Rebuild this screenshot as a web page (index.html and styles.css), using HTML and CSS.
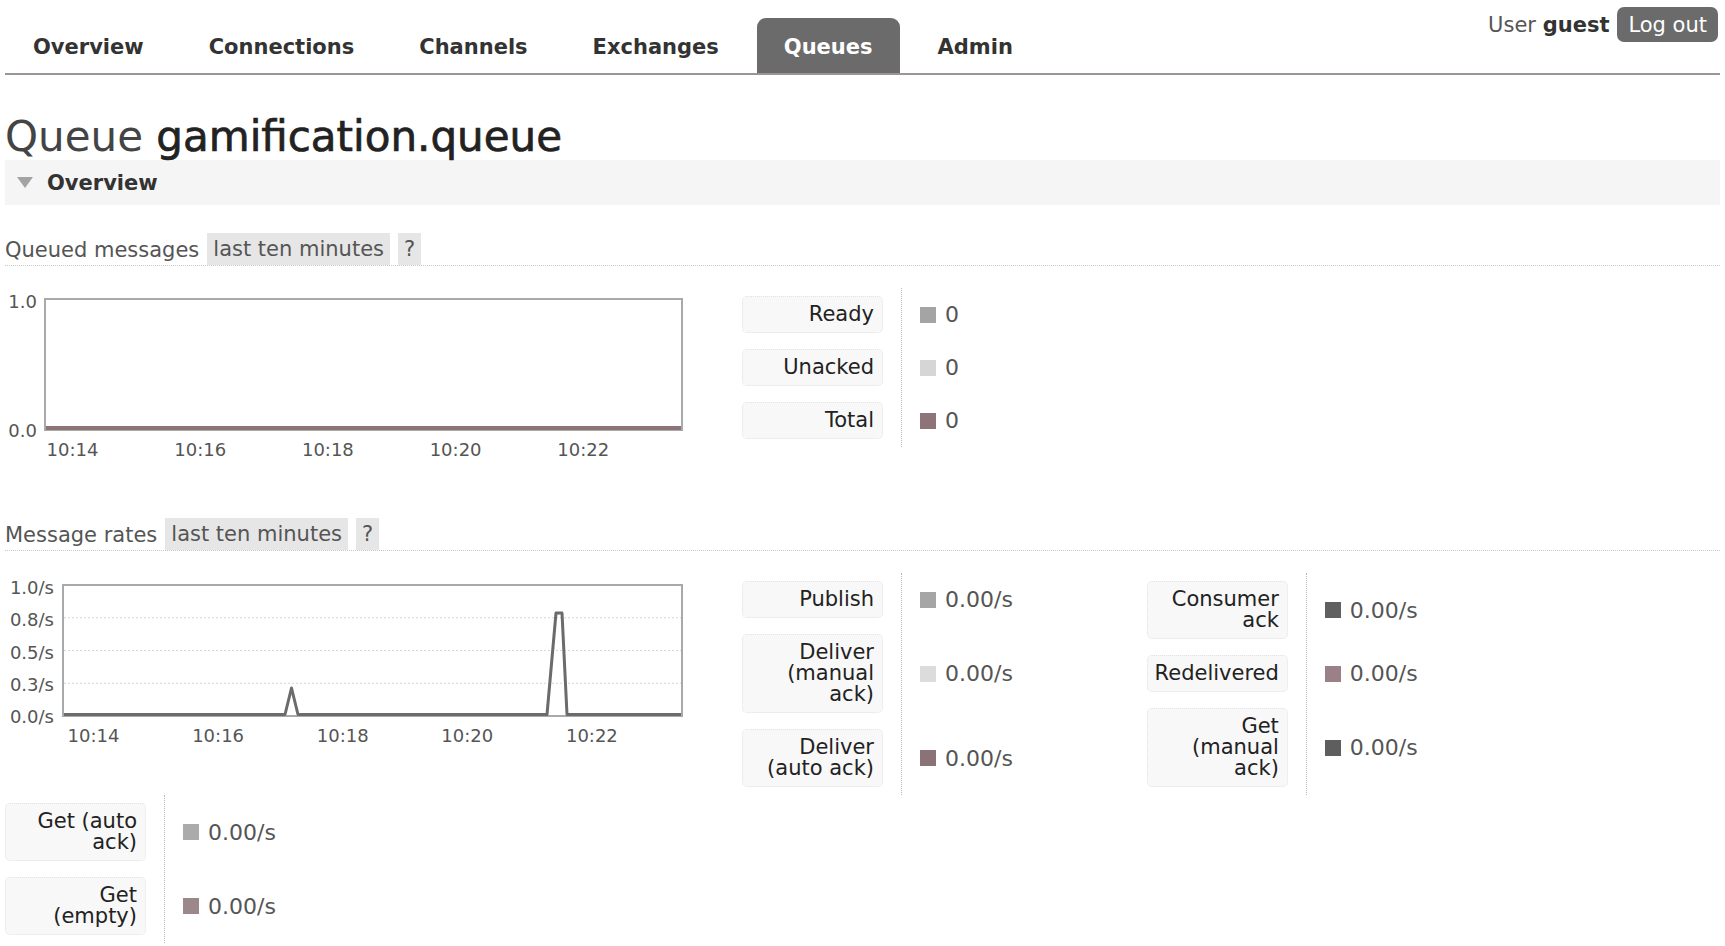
FILE: index.html
```html
<!DOCTYPE html>
<html lang="en">
<head>
<meta charset="utf-8">
<title>RabbitMQ Management: Queue gamification.queue</title>
<link rel="stylesheet" href="styles.css">
</head>
<body>
<div class="page">
  <header class="header">
    <nav class="tabs">
      <a class="tab" href="#">Overview</a>
      <a class="tab" href="#">Connections</a>
      <a class="tab" href="#">Channels</a>
      <a class="tab" href="#">Exchanges</a>
      <a class="tab active" href="#">Queues</a>
      <a class="tab" href="#">Admin</a>
    </nav>
    <div class="login">
      <span class="user">User <b>guest</b></span>
      <button class="logout" type="button">Log out</button>
    </div>
  </header>

  <h1 class="title">Queue <b>gamification.queue</b></h1>

  <div class="section-head"><span class="arrow"></span>Overview</div>

  <h3 class="subhead"><span class="subhead-label">Queued messages</span><span class="pill">last ten minutes</span><span class="pill">?</span></h3>

  <div class="chart-row">
    <svg class="chart" width="680" height="175" viewBox="0 0 680 175">
      <rect x="40" y="11" width="637" height="131" fill="#fff" stroke="#a9a9a9" stroke-width="2"/>
      <line x1="41" y1="140" x2="676" y2="140" stroke="#8d7479" stroke-width="4"/>
      <text class="axis" x="32" y="19.5" text-anchor="end">1.0</text>
      <text class="axis" x="32" y="148.5" text-anchor="end">0.0</text>
      <text class="axis" x="67.5" y="167.5" text-anchor="middle">10:14</text>
      <text class="axis" x="195.2" y="167.5" text-anchor="middle">10:16</text>
      <text class="axis" x="322.9" y="167.5" text-anchor="middle">10:18</text>
      <text class="axis" x="450.6" y="167.5" text-anchor="middle">10:20</text>
      <text class="axis" x="578.3" y="167.5" text-anchor="middle">10:22</text>
    </svg>
    <div class="legends">
      <div class="legend">
        <div class="divider rows-3"></div>
        <div class="key">Ready</div>
        <div class="val"><span class="sw c-ready"></span>0</div>
        <div class="key">Unacked</div>
        <div class="val"><span class="sw c-unacked"></span>0</div>
        <div class="key">Total</div>
        <div class="val"><span class="sw c-total"></span>0</div>
      </div>
    </div>
  </div>

  <h3 class="subhead subhead-second"><span class="subhead-label">Message rates</span><span class="pill">last ten minutes</span><span class="pill">?</span></h3>

  <div class="chart-row">
    <svg class="chart" width="680" height="176" viewBox="0 0 680 176">
      <rect x="58" y="12" width="619" height="131" fill="#fff" stroke="#a9a9a9" stroke-width="2"/>
      <line x1="59" y1="44.75" x2="676" y2="44.75" stroke="#d6d6d6" stroke-width="1" stroke-dasharray="2 2"/>
      <line x1="59" y1="77.5" x2="676" y2="77.5" stroke="#d6d6d6" stroke-width="1" stroke-dasharray="2 2"/>
      <line x1="59" y1="110.25" x2="676" y2="110.25" stroke="#d6d6d6" stroke-width="1" stroke-dasharray="2 2"/>
      <path d="M59 141.5 L280 141.5 L286.5 115 L293 141.5 L542 141.5 L551 40 L557 40 L562 141.5 L676 141.5" fill="none" stroke="#6b6b6b" stroke-width="3" stroke-linejoin="round"/>
      <text class="axis" x="49" y="20.5" text-anchor="end">1.0/s</text>
      <text class="axis" x="49" y="52.5" text-anchor="end">0.8/s</text>
      <text class="axis" x="49" y="85.5" text-anchor="end">0.5/s</text>
      <text class="axis" x="49" y="117.5" text-anchor="end">0.3/s</text>
      <text class="axis" x="49" y="149.5" text-anchor="end">0.0/s</text>
      <text class="axis" x="88.5" y="168.5" text-anchor="middle">10:14</text>
      <text class="axis" x="213.1" y="168.5" text-anchor="middle">10:16</text>
      <text class="axis" x="337.7" y="168.5" text-anchor="middle">10:18</text>
      <text class="axis" x="462.3" y="168.5" text-anchor="middle">10:20</text>
      <text class="axis" x="586.9" y="168.5" text-anchor="middle">10:22</text>
    </svg>
    <div class="legends">
      <div class="legend">
        <div class="divider rows-3"></div>
        <div class="key">Publish</div>
        <div class="val"><span class="sw c-publish"></span>0.00/s</div>
        <div class="key">Deliver<br>(manual<br>ack)</div>
        <div class="val"><span class="sw c-deliver-manual"></span>0.00/s</div>
        <div class="key">Deliver<br>(auto ack)</div>
        <div class="val"><span class="sw c-deliver-auto"></span>0.00/s</div>
      </div>
      <div class="legend">
        <div class="divider rows-3"></div>
        <div class="key">Consumer<br>ack</div>
        <div class="val"><span class="sw c-consumer-ack"></span>0.00/s</div>
        <div class="key">Redelivered</div>
        <div class="val"><span class="sw c-redelivered"></span>0.00/s</div>
        <div class="key">Get<br>(manual<br>ack)</div>
        <div class="val"><span class="sw c-get-manual"></span>0.00/s</div>
      </div>
    </div>
  </div>

  <div class="legend legend-bottom">
    <div class="divider rows-2"></div>
    <div class="key">Get (auto<br>ack)</div>
    <div class="val"><span class="sw c-get-auto"></span>0.00/s</div>
    <div class="key">Get<br>(empty)</div>
    <div class="val"><span class="sw c-get-empty"></span>0.00/s</div>
  </div>
</div>
</body>
</html>
```

FILE: styles.css
```css
* { box-sizing: border-box; }

html, body {
  margin: 0;
  background: #fff;
}

body {
  font-family: "DejaVu Sans", Verdana, sans-serif;
  font-size: 21px;
  color: #333;
}

.page {
  padding: 0 5px;
}

/* Header / tabs */
.header {
  display: flex;
  justify-content: space-between;
  align-items: flex-start;
  border-bottom: 2px solid #9b9597;
}

.tabs {
  display: flex;
  gap: 11px;
  margin: 18px 0 0 1px;
}

.tab {
  display: block;
  height: 55px;
  line-height: 59px;
  padding: 0 27px;
  font-weight: bold;
  color: #333;
  text-decoration: none;
  border-radius: 9px 9px 0 0;
}

.tab.active {
  background: #6b6b6b;
  color: #fff;
}

.login {
  display: flex;
  align-items: center;
  gap: 8px;
  margin: 7px 2px 0 0;
}

.user { color: #555; }
.user b { color: #333; }

.logout {
  font: inherit;
  color: #fff;
  background: #6b6b6b;
  border: 0;
  border-radius: 7px;
  height: 35px;
  padding: 0 11px;
}

/* Title */
.title {
  margin: 39px 0 0;
  font-size: 42px;
  line-height: 46px;
  font-weight: normal;
  color: #444;
}

.title b {
  font-weight: normal;
  color: #222;
  -webkit-text-stroke: 0.7px #222;
}

/* Collapsible section header */
.section-head {
  display: flex;
  align-items: center;
  gap: 14px;
  height: 45px;
  padding-left: 12px;
  background: #f5f5f5;
  font-weight: bold;
  color: #333;
}

.arrow {
  width: 0;
  height: 0;
  border-left: 8.5px solid transparent;
  border-right: 8.5px solid transparent;
  border-top: 11px solid #a3a3a3;
}

/* Sub headings with pills */
.subhead {
  display: flex;
  align-items: center;
  margin: 28px 0 0;
  font-size: 21px;
  font-weight: normal;
  color: #555;
  border-bottom: 1px dotted #c8c8c8;
}

.subhead-label {
  padding-top: 1px;
}

.subhead-second {
  margin-top: 55px;
}

.pill {
  height: 32px;
  line-height: 33px;
  padding: 0 6px;
  margin-left: 8px;
  background: #e6e6e6;
}

/* Chart rows */
.chart-row {
  display: flex;
  align-items: flex-start;
  margin-top: 22px;
}

.chart {
  display: block;
  flex: none;
}

.axis {
  font-family: "DejaVu Sans", Verdana, sans-serif;
  font-size: 18px;
  fill: #555;
}

.legends {
  display: flex;
  align-items: flex-start;
  gap: 134px;
  margin-left: 57px;
}

/* Legend tables */
.legend {
  display: grid;
  grid-template-columns: 141px 1px auto;
  column-gap: 18px;
  row-gap: 16px;
  padding: 8px 0;
}

.legend-bottom {
  width: max-content;
  margin-top: 0;
}

.divider {
  grid-column: 2;
  margin: -8px 0;
  border-left: 1px dotted #b9b9b9;
}

.divider.rows-3 { grid-row: 1 / span 3; }
.divider.rows-2 { grid-row: 1 / span 2; }

.key {
  grid-column: 1;
  padding: 7px 8px 7px 6px;
  background: #f8f8f8;
  border: 1px dotted #e3e3e3;
  border-radius: 5px;
  text-align: right;
  white-space: nowrap;
  font-size: 21px;
  line-height: 21px;
  color: #222;
}

.val {
  grid-column: 3;
  align-self: center;
  display: flex;
  align-items: center;
  white-space: nowrap;
  font-size: 22px;
  color: #555;
}

.sw {
  width: 16px;
  height: 16px;
  margin-right: 9px;
  flex: none;
}

.c-ready { background: #a4a4a4; }
.c-unacked { background: #d6d6d6; }
.c-total { background: #8d7479; }
.c-publish { background: #a5a5a5; }
.c-deliver-manual { background: #dcdcdc; }
.c-deliver-auto { background: #8b7277; }
.c-consumer-ack { background: #606060; }
.c-redelivered { background: #9b8187; }
.c-get-manual { background: #5e5e5e; }
.c-get-auto { background: #ababab; }
.c-get-empty { background: #9a888b; }
```
